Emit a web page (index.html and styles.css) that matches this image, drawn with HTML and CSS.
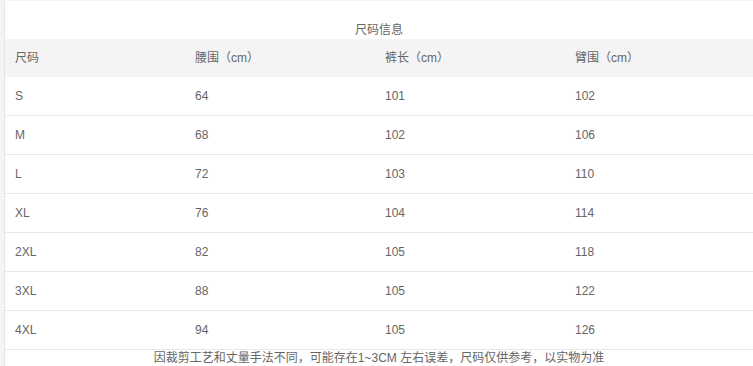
FILE: index.html
```html
<!DOCTYPE html>
<html lang="zh-CN">
<head>
<meta charset="utf-8">
<title>尺码信息</title>
<link rel="stylesheet" href="styles.css">
</head>
<body>
<div class="page">
  <div class="title">尺码信息</div>
  <div class="table">
    <div class="row head"><div>尺码</div><div>腰围（cm）</div><div>裤长（cm）</div><div>臂围（cm）</div></div>
    <div class="row"><div>S</div><div>64</div><div>101</div><div>102</div></div>
    <div class="row"><div>M</div><div>68</div><div>102</div><div>106</div></div>
    <div class="row"><div>L</div><div>72</div><div>103</div><div>110</div></div>
    <div class="row"><div>XL</div><div>76</div><div>104</div><div>114</div></div>
    <div class="row"><div>2XL</div><div>82</div><div>105</div><div>118</div></div>
    <div class="row"><div>3XL</div><div>88</div><div>105</div><div>122</div></div>
    <div class="row"><div>4XL</div><div>94</div><div>105</div><div>126</div></div>
  </div>
  <div class="note">因裁剪工艺和丈量手法不同，可能存在1~3CM 左右误差，尺码仅供参考，以实物为准</div>
</div>
</body>
</html>
```
FILE: styles.css
```css
html, body {
  margin: 0;
  padding: 0;
}
body {
  background: #f4f4f4;
  font-family: "Liberation Sans", "Noto Sans CJK SC", sans-serif;
  font-size: 12px;
  color: #666;
}
.page {
  margin: 1px 0 0 4px;
  border-left: 1px solid #e4e4e4;
  background: #fff;
  min-height: 365px;
}
.title {
  height: 38px;
  box-sizing: border-box;
  padding-top: 20px;
  line-height: 18px;
  text-align: center;
}
.row {
  display: grid;
  grid-template-columns: 180px 190px 190px 1fr;
  height: 39px;
  box-sizing: border-box;
  border-bottom: 1px solid #e8e8e8;
  align-items: center;
}
.row > div {
  padding-left: 10px;
  line-height: 16px;
}
.row.head {
  background: #f4f4f4;
  height: 38px;
  border-bottom: none;
}
.note {
  text-align: center;
  line-height: 16px;
  padding-top: 0;
}
```
